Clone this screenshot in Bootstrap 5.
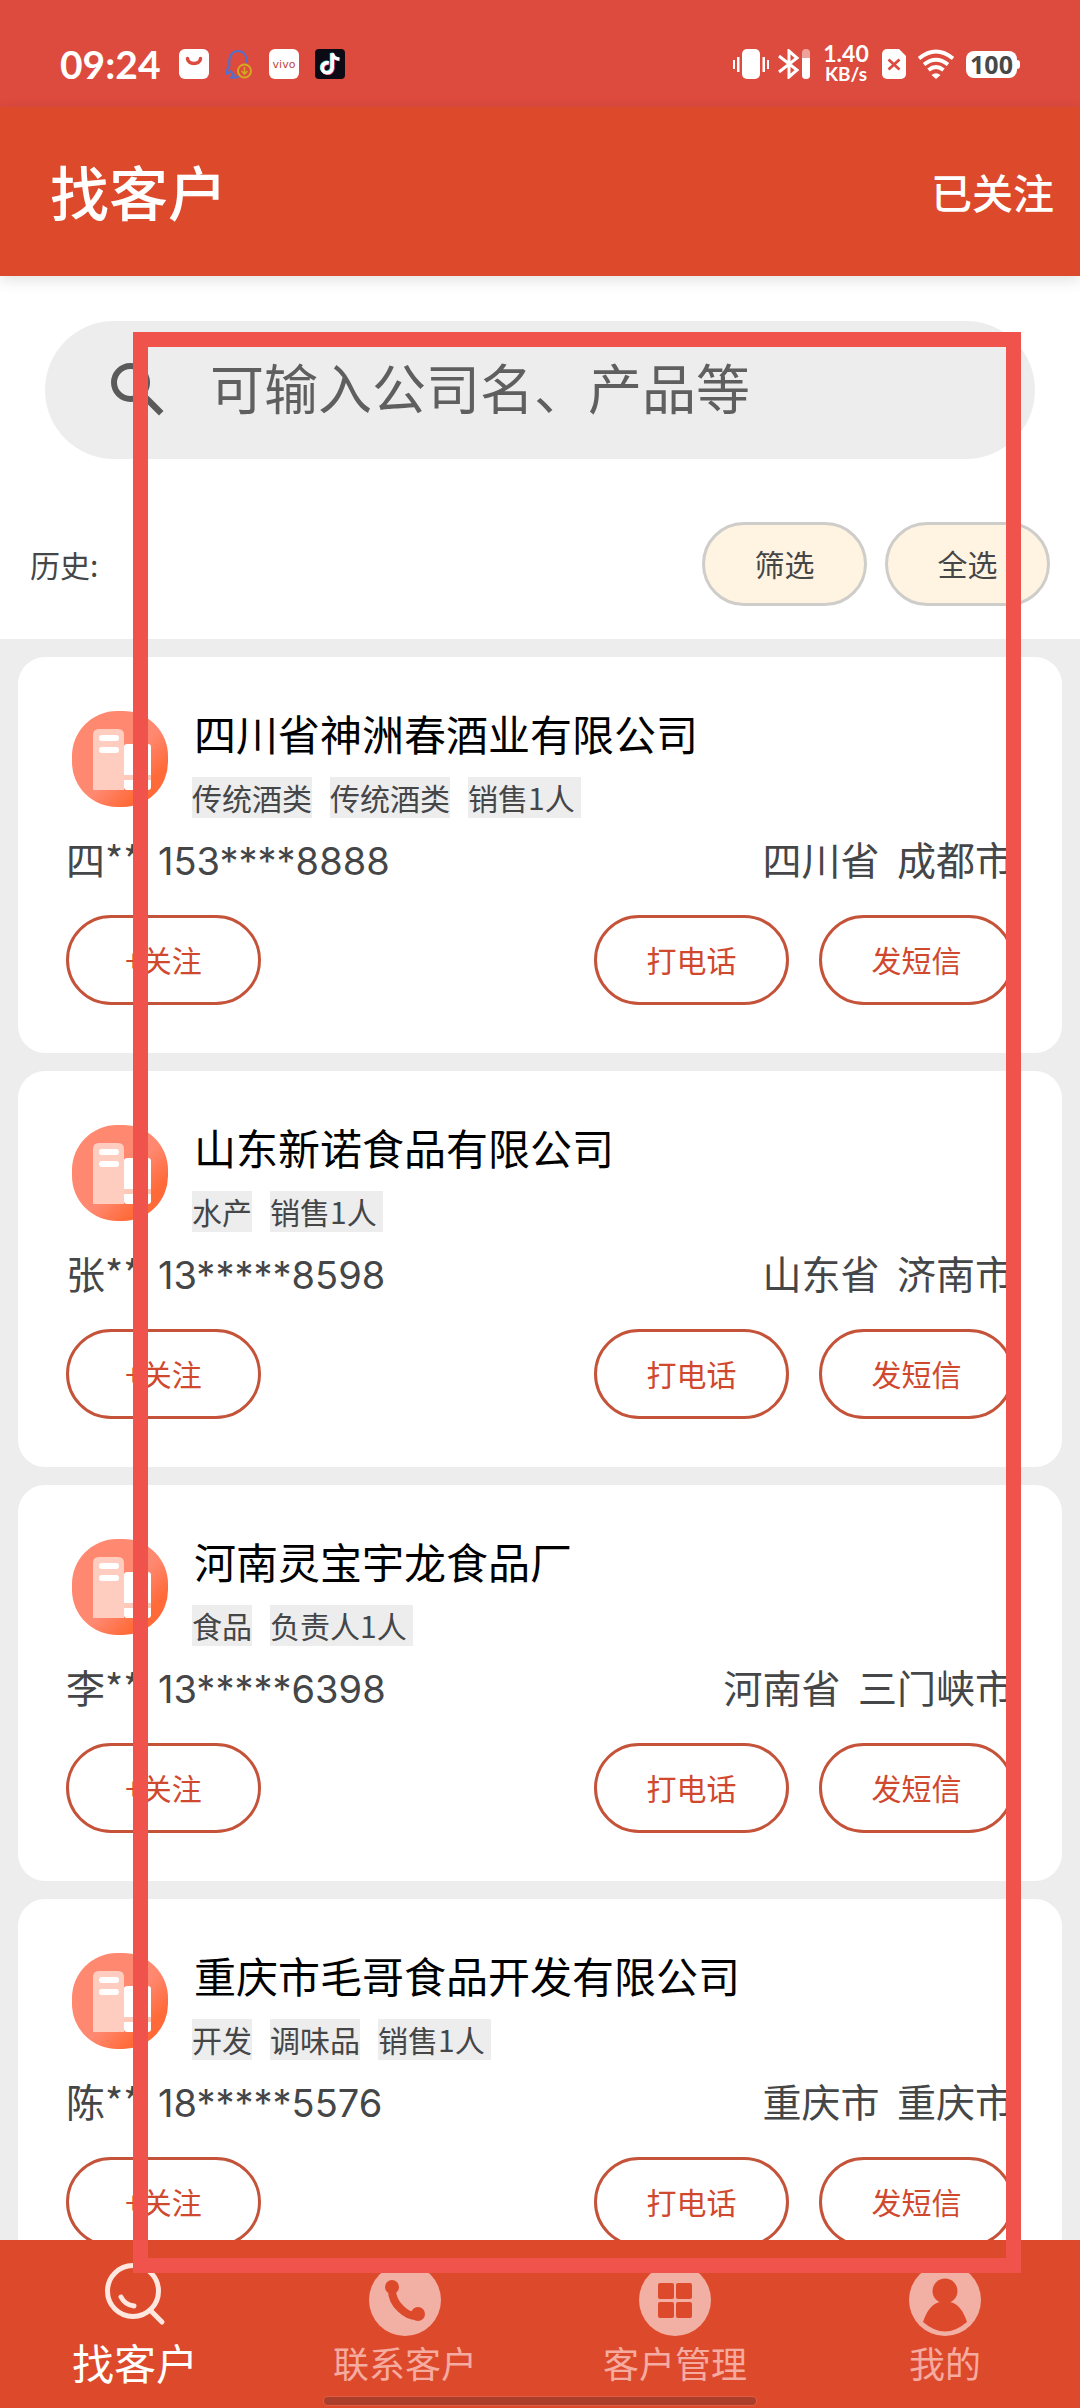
<!DOCTYPE html>
<html lang="zh-CN">
<head>
<meta charset="utf-8">
<meta name="viewport" content="width=device-width, initial-scale=1">
<title>找客户</title>
<link href="https://cdn.jsdelivr.net/npm/bootstrap@5.3.0/dist/css/bootstrap.min.css" rel="stylesheet">
<style>
  :root { --brand: #dd492b; --panel: #ededed; --ink: #444648; --line: #c4533a; }
  body { font-family: "Noto Sans CJK SC", sans-serif; background: var(--panel); color: var(--ink); font-size: 30px; line-height: 42px; }
  svg { display: block; flex: none; }
  .status-bar { background: #dd4a3e; height: 107px; padding: 21px 60px 0 60px; color: #fff; font-family: Lato, sans-serif; }
  .clock { font-size: 39px; font-weight: 700; margin-right: 18px; }
  .net-speed { font-weight: 700; line-height: 20px; text-align: center; width: 48px; margin: 0 12px 0 11px; padding-bottom: 2px; }
  .net-speed span { display: block; font-size: 19px; }
  .net-speed .rate { font-size: 23px; line-height: 22px; }
  .battery-level { background: #fff; color: #484848; border-radius: 8px; height: 27px; width: 51px; font: 700 25px/27px "Noto Sans", sans-serif; text-align: center; }
  .battery-tip { background: #fff; width: 3px; height: 9px; border-radius: 0 3px 3px 0; }
  .app-header { background: var(--brand); color: #fff; height: 169px; padding: 0 26px 2px 50px; box-shadow: 0 4px 14px rgba(0,0,0,.12); z-index: 1; }
  .app-header h1 { font-size: 59px; line-height: 72px; font-weight: 500; }
  .app-header a { font-size: 41px; font-weight: 500; }
  .search-panel { padding: 45px 30px 33px; }
  .search-pill { background: var(--panel); height: 138px; margin: 0 15px 63px; padding: 0 57px; gap: 36px; }
  .search-pill .form-control { font-size: 54px; line-height: 72px; color: #5f5f5f; margin-bottom: 6px; }
  .search-pill .form-control::placeholder { color: #5f5f5f; opacity: 1; }
  .filter-row { gap: 18px; }
  .filter-btn { --bs-btn-bg: #fff3e2; --bs-btn-border-color: #cfcdc9; --bs-btn-color: var(--ink); --bs-btn-hover-bg: #ffe9cb; --bs-btn-hover-color: var(--ink); width: 165px; height: 84px; }
  .act-btn { --bs-btn-color: #d0482d; --bs-btn-border-color: var(--line); --bs-btn-hover-bg: #fdeae6; --bs-btn-hover-color: #d0482d; width: 195px; height: 90px; }
  .filter-btn, .act-btn { --bs-btn-border-width: 3px; --bs-btn-font-size: 30px; --bs-btn-line-height: 40px; --bs-btn-padding-x: 0; padding-top: 0; padding-bottom: 3px; }
  .lead-list { padding: 18px; gap: 18px; min-height: 0; }
  .lead-card { border-radius: 27px; padding: 54px 48px 48px; flex: none; }
  .lead-head { gap: 24px; padding-left: 6px; }
  .lead-head h2 { font-size: 42px; line-height: 44px; font-weight: 400; color: #000; margin: 0 0 22px; padding-left: 2px; }
  .tags { gap: 18px; }
  .tags li { background: var(--panel); line-height: 41px; height: 41px; white-space: pre; }
  .lead-info { font-size: 39px; line-height: 54px; height: 54px; margin: 13px 0 30px; white-space: pre; }
  .who { min-width: 92px; }
  .digits { font-family: Inter, "Noto Sans CJK SC", sans-serif; font-size: 38px; }
  .lead-actions { gap: 30px; }
  .tab-bar { background: var(--brand); height: 168px; padding-top: 21px; }
  .tab-bar a { color: #f5aba0; font-size: 36px; line-height: 52px; }
  .tab-bar a.active { color: #fff; font-size: 42px; }
  .home-indicator { position: absolute; left: 30%; right: 30%; bottom: 3px; height: 8px; border-radius: 4px; background: #ab3e2b; box-shadow: 0 0 0 1px #e05d43; }
  .focus-frame { position: absolute; top: 332px; right: 59px; bottom: 135px; left: 133px; border: 15px solid #ef534b; pointer-events: none; z-index: 5; }
</style>
</head>
<body>
<svg class="position-absolute" width="0" height="0" aria-hidden="true">
  <defs>
    <linearGradient id="avatarFill" x1="0" y1="0" x2="1" y2="1"><stop offset=".55" stop-color="#ff8870"/><stop offset=".78" stop-color="#ff6a38"/></linearGradient>
  </defs>
  <symbol id="company" viewBox="0 0 96 96">
    <rect width="96" height="96" rx="45" fill="url(#avatarFill)"/>
    <rect x="52" y="33" width="27" height="46" rx="3" fill="#fff"/>
    <path d="M67 41h5v20h-5z" fill="#ff8260"/><path d="M52 64h27v5H52z" fill="#ffc9b9"/>
    <path d="M21 79V24q0-6 6-6h19q6 0 6 6v55z" fill="#ffcdc0"/>
    <path d="M30 27h14M30 39h14" stroke="#fff" stroke-width="6" stroke-linecap="round"/>
  </symbol>
</svg>
<div class="position-relative d-flex flex-column vh-100 overflow-hidden">
  <div class="status-bar d-flex align-items-center flex-shrink-0">
    <span class="clock">09:24</span>
    <div class="d-flex align-items-center gap-3">
      <svg width="30" height="30" viewBox="0 0 30 30"><rect width="30" height="30" rx="6" fill="#fff"/><path d="M8.500 9.500a6.500 5 0 0 0 13 0" fill="none" stroke="#dd4a3e" stroke-width="3.500" stroke-linecap="round"/></svg>
      <svg width="28" height="30" viewBox="0 0 28 30" fill="none"><path d="M4.500 17C3 8 7 2 13 2s9 5 9 12M4.500 17Q1 21 2 25l4-3q1 3 3 4l-3 2.500q4 .8 8-1" stroke="#5470c8" stroke-width="2.200" stroke-linejoin="round"/><circle cx="19.500" cy="22" r="6.500" stroke="#d3a920" stroke-width="2"/><path d="M19.500 18v7m-3-3 3 3 3-3" stroke="#d3a920" stroke-width="1.600"/></svg>
      <svg width="30" height="30" viewBox="0 0 30 30"><rect width="30" height="30" rx="6" fill="#fff"/><text x="15" y="19" font-family="DejaVu Sans, sans-serif" font-size="11" text-anchor="middle" fill="#c4473c">vivo</text></svg>
      <svg width="30" height="30" viewBox="0 0 30 30"><rect width="30" height="30" rx="4" fill="#0c0a14"/><g fill="none" stroke-width="3.500"><path d="M13 13.500a5 5 0 1 0 3.500 5V4c1 4 3 5.500 7 6" stroke="#3fe0e0"/><path d="M14.500 14.500a5 5 0 1 0 3.500 5V5c1 4 3 5 7 5.500" stroke="#f04a72"/><path d="M13.700 14a5 5 0 1 0 3.500 5V4.500c1 4 3 5 7 5.500" stroke="#fff"/></g></svg>
    </div>
    <div class="d-flex align-items-center ms-auto">
      <svg width="36" height="30" viewBox="0 0 36 30" fill="#fff"><rect x="9" width="18" height="30" rx="5"/><path d="M0 11h2v9H0zM4 8h2.500v15H4zM29.500 8H32v15h-2.500zM34 11h2v9h-2z"/></svg>
      <svg class="ms-2" width="34" height="30" viewBox="0 0 34 30" fill="none" stroke="#fff" stroke-width="3"><path d="M2 7l18 14-8 7V2l8 7L2 23"/><rect x="25" width="8" height="30" rx="4" fill="#eda39c" stroke="none"/><path d="M25 9h8v17a4 4 0 0 1-8 0z" fill="#fff" stroke="none"/></svg>
      <div class="net-speed"><span class="rate">1.40</span><span>KB/s</span></div>
      <svg width="24" height="30" viewBox="0 0 24 30"><path d="M5 0h12l7 7v18a5 5 0 0 1-5 5H5a5 5 0 0 1-5-5V5a5 5 0 0 1 5-5z" fill="#fff"/><path d="M6.500 10.500l11 10M17.500 10.500l-11 10" stroke="#dd4a3e" stroke-width="2.800"/></svg>
      <svg class="ms-2 me-2" width="44" height="30" viewBox="-2 0 44 30" fill="none" stroke="#fff" stroke-width="3.800"><path d="M3 9.500q17-14 34 0M8 15.500q12-9.500 24 0M12.500 21q7.500-6 15 0"/><path d="M15.500 26q4.500-3.500 9 0L20 30z" fill="#fff" stroke="none"/></svg>
      <span class="battery-level">100</span><span class="battery-tip"></span>
    </div>
  </div>

  <header class="app-header d-flex align-items-center justify-content-between flex-shrink-0 position-relative">
    <h1 class="m-0">找客户</h1>
    <a href="#followed" class="text-white text-decoration-none">已关注</a>
  </header>

  <section class="search-panel bg-white flex-shrink-0">
    <label class="search-pill rounded-pill d-flex align-items-center">
      <svg width="72" height="72" viewBox="0 0 24 24" fill="#5a5a5a"><path d="M15.500 14h-.79l-.28-.27A6.470 6.470 0 0 0 16 9.500 6.500 6.500 0 1 0 9.500 16c1.610 0 3.090-.59 4.230-1.570l.27.28v.79l5 4.990L20.490 19l-4.990-5zm-6 0a4.500 4.500 0 1 1 0-9 4.500 4.500 0 0 1 0 9z"/></svg>
      <input type="search" class="form-control border-0 bg-transparent shadow-none p-0" placeholder="可输入公司名、产品等" aria-label="搜索">
    </label>
    <div class="filter-row d-flex align-items-center">
      <span class="me-auto">历史:</span>
      <button type="button" class="btn filter-btn rounded-pill">筛选</button>
      <button type="button" class="btn filter-btn rounded-pill">全选</button>
    </div>
  </section>

  <main class="lead-list d-flex flex-column flex-grow-1 overflow-hidden">
    <article class="lead-card bg-white">
      <div class="lead-head d-flex">
        <svg width="96" height="96"><use href="#company"/></svg>
        <div><h2>四川省神洲春酒业有限公司</h2><ul class="tags list-unstyled d-flex m-0"><li>传统酒类</li><li>传统酒类</li><li>销售1人 </li></ul></div>
      </div>
      <div class="lead-info d-flex align-items-baseline"><span class="who">四**</span><span class="digits">153****8888</span><span class="ms-auto">四川省  成都市</span></div>
      <div class="lead-actions d-flex"><button type="button" class="btn act-btn rounded-pill me-auto">+关注</button><button type="button" class="btn act-btn rounded-pill">打电话</button><button type="button" class="btn act-btn rounded-pill">发短信</button></div>
    </article>
    <article class="lead-card bg-white">
      <div class="lead-head d-flex">
        <svg width="96" height="96"><use href="#company"/></svg>
        <div><h2>山东新诺食品有限公司</h2><ul class="tags list-unstyled d-flex m-0"><li>水产</li><li>销售1人 </li></ul></div>
      </div>
      <div class="lead-info d-flex align-items-baseline"><span class="who">张**</span><span class="digits">13*****8598</span><span class="ms-auto">山东省  济南市</span></div>
      <div class="lead-actions d-flex"><button type="button" class="btn act-btn rounded-pill me-auto">+关注</button><button type="button" class="btn act-btn rounded-pill">打电话</button><button type="button" class="btn act-btn rounded-pill">发短信</button></div>
    </article>
    <article class="lead-card bg-white">
      <div class="lead-head d-flex">
        <svg width="96" height="96"><use href="#company"/></svg>
        <div><h2>河南灵宝宇龙食品厂</h2><ul class="tags list-unstyled d-flex m-0"><li>食品</li><li>负责人1人 </li></ul></div>
      </div>
      <div class="lead-info d-flex align-items-baseline"><span class="who">李**</span><span class="digits">13*****6398</span><span class="ms-auto">河南省  三门峡市</span></div>
      <div class="lead-actions d-flex"><button type="button" class="btn act-btn rounded-pill me-auto">+关注</button><button type="button" class="btn act-btn rounded-pill">打电话</button><button type="button" class="btn act-btn rounded-pill">发短信</button></div>
    </article>
    <article class="lead-card bg-white">
      <div class="lead-head d-flex">
        <svg width="96" height="96"><use href="#company"/></svg>
        <div><h2>重庆市毛哥食品开发有限公司</h2><ul class="tags list-unstyled d-flex m-0"><li>开发</li><li>调味品</li><li>销售1人 </li></ul></div>
      </div>
      <div class="lead-info d-flex align-items-baseline"><span class="who">陈**</span><span class="digits">18*****5576</span><span class="ms-auto">重庆市  重庆市</span></div>
      <div class="lead-actions d-flex"><button type="button" class="btn act-btn rounded-pill me-auto">+关注</button><button type="button" class="btn act-btn rounded-pill">打电话</button><button type="button" class="btn act-btn rounded-pill">发短信</button></div>
    </article>
  </main>

  <nav class="tab-bar nav nav-fill flex-shrink-0 position-relative align-items-start">
    <a href="#find" class="active col text-decoration-none d-flex flex-column align-items-center" aria-current="page">
      <svg width="72" height="75" viewBox="0 0 72 75" fill="none" stroke="#ffe6df" stroke-width="5" stroke-linecap="round"><circle cx="34" cy="30" r="25.500"/><path d="M51 49l12 12"/><path d="M22 36q4 8 13 9"/></svg>
      <span>找客户</span>
    </a>
    <a href="#contact" class="col text-decoration-none d-flex flex-column align-items-center">
      <svg width="72" height="75" viewBox="0 0 72 75"><circle cx="36" cy="39" r="36" fill="#f2b0a5"/><path d="M23 26q-1 13 9 22 8 8 18 7" fill="none" stroke="#dd492b" stroke-width="8" stroke-linecap="round"/><circle cx="23" cy="26" r="7" fill="#dd492b"/><circle cx="49" cy="53" r="7" fill="#dd492b"/></svg>
      <span>联系客户</span>
    </a>
    <a href="#manage" class="col text-decoration-none d-flex flex-column align-items-center">
      <svg width="72" height="75" viewBox="0 0 72 75"><circle cx="36" cy="39" r="36" fill="#f2b0a5"/><g fill="#dd492b"><rect x="19" y="22" width="16" height="16" rx="2"/><rect x="37" y="22" width="16" height="16" rx="2"/><rect x="19" y="41" width="16" height="16" rx="2"/><rect x="37" y="41" width="16" height="16" rx="2"/></g></svg>
      <span>客户管理</span>
    </a>
    <a href="#mine" class="col text-decoration-none d-flex flex-column align-items-center">
      <svg width="72" height="75" viewBox="0 0 72 75"><circle cx="36" cy="39" r="36" fill="#f2b0a5"/><g fill="#dd492b"><circle cx="36" cy="30" r="12.500"/><path d="M14 61q6-18 17-20h10q11 2 17 20-22 19-44 0z"/></g></svg>
      <span>我的</span>
    </a>
    <div class="home-indicator"></div>
  </nav>
  <div class="focus-frame" aria-hidden="true"></div>
</div>
<script src="https://cdn.jsdelivr.net/npm/bootstrap@5.3.0/dist/js/bootstrap.bundle.min.js"></script>
</body>
</html>
